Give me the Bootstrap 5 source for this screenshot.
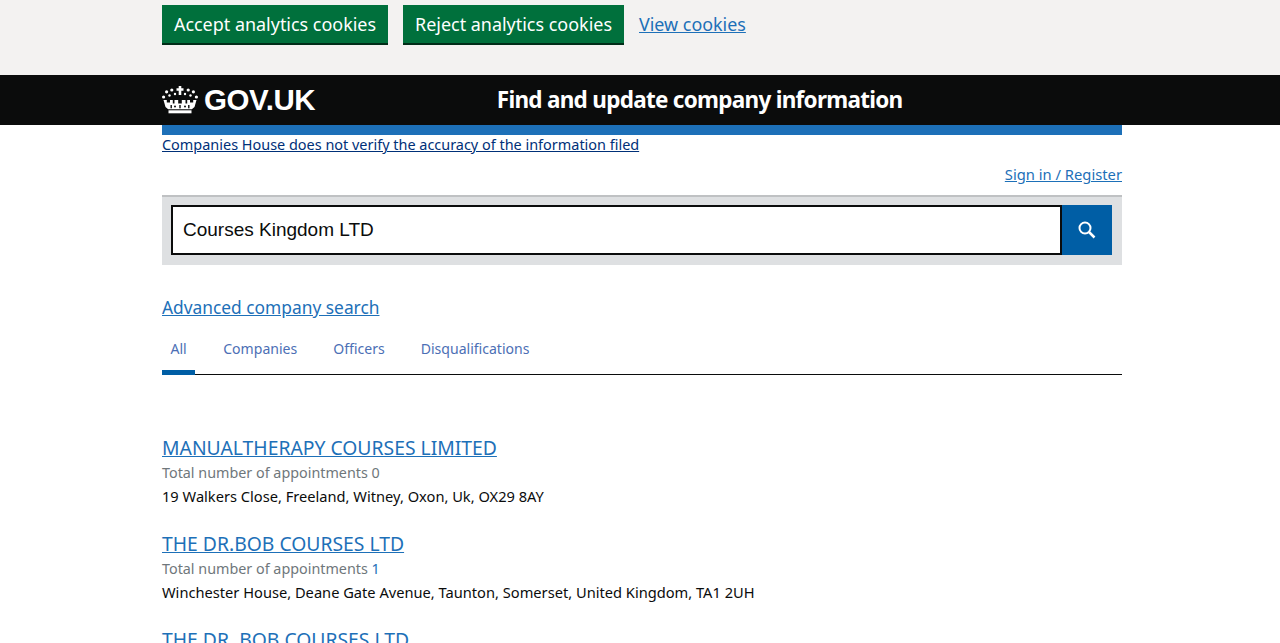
<!DOCTYPE html>
<html lang="en">
<head>
<meta charset="utf-8">
<title>Find and update company information</title>
<link href="https://cdn.jsdelivr.net/npm/bootstrap@5.3.0/dist/css/bootstrap.min.css" rel="stylesheet">
<style>
html,body{height:643px;overflow:hidden}
body{font-family:"Noto Sans",sans-serif;color:#0b0c0c;background:#fff}
.wrap{width:960px;margin-left:162px}
a{color:#1d70b8}
.cookie-bar{background:#f3f2f1;height:75px;padding-top:5px}
.gbtn{background:#00703c;color:#fff;border:0;border-radius:0;box-shadow:0 2px 0 #002d18;width:226px;height:38px;padding:0;text-align:center;font-size:17.95px;line-height:38px;white-space:nowrap}
.gbtn:hover{background:#00703c;color:#fff}
.gbtn-b{width:221px;margin-left:15px}
.cookie-link{font-size:17.9px;margin-left:15px;margin-top:6px}
.top-head{background:#0b0c0c;height:50px;color:#fff}
.logo-text{font-family:"Liberation Sans",sans-serif;font-weight:700;font-size:29.5px;line-height:50px;letter-spacing:-.4px;margin-left:6px}
.svc-name{font-weight:700;font-size:22.5px;line-height:50px;margin-left:181.500px;letter-spacing:-.72px;white-space:nowrap}
.phase-bar{height:10px;background:#1d70b8}
.notice{font-size:14.45px;line-height:20px;color:#003078;display:block}
.sign-line{font-size:14.75px;line-height:18px;margin-top:10px;text-align:right}
.search-band{margin-top:12px;height:70px;background:#dee0e2;border-top:2px solid #bfc1c3;padding:8px 10px 10px 9px}
.search-input{flex:1;height:50px;border:2px solid #0b0c0c;border-radius:0;padding:0 10px;font-size:19px;font-family:"Liberation Sans",sans-serif;color:#0b0c0c;background:#fff;outline:0}
.search-go{width:50px;height:50px;background:#005ea5;border:0;border-radius:0;padding:0}
.adv{font-size:17.35px;line-height:24px;margin-top:30px}
.tab-row{margin-top:15px;border-bottom:1px solid #0b0c0c;height:41px;font-size:14.05px}
.tab-item{padding:0 8px;margin-right:20px;height:41px;line-height:30px;text-decoration:none;color:#4c6fb5;margin-bottom:-1px}
.tab-on{border-bottom:5px solid #005ea5;padding:0 8.500px}
.result-gap{height:60px}
.hit h2{font-size:19.33px;line-height:26px;font-weight:400;margin:0}
.meta{font-size:14.35px;line-height:23.500px;color:#6f777b}
.addr{font-size:14.65px;line-height:22.500px;color:#0b0c0c}
</style>
</head>
<body>
<div class="cookie-bar">
  <div class="wrap d-flex align-items-start">
    <a class="btn gbtn" href="#">Accept analytics cookies</a>
    <a class="btn gbtn gbtn-b" href="#">Reject analytics cookies</a>
    <a class="cookie-link" href="#">View cookies</a>
  </div>
</div>
<header class="top-head">
  <div class="wrap d-flex">
    <div class="d-flex align-items-center">
      <svg width="36" height="28" viewBox="0 0 36 28" aria-hidden="true">
        <g fill="#fff">
          <path d="M16.700 0h2.600v2.200h2.200v2.500h-2.200v4.300h-2.600V4.700h-2.200V2.200h2.200z"/>
          <circle cx="9.800" cy="4" r="1.600"/><circle cx="26.200" cy="4" r="1.600"/>
          <circle cx="13" cy="8" r="1.200"/><circle cx="23" cy="8" r="1.200"/>
          <circle cx="4.600" cy="5.800" r="1.600"/><circle cx="31.400" cy="5.800" r="1.600"/>
          <circle cx="7.500" cy="9.500" r="1.200"/><circle cx="28.500" cy="9.500" r="1.200"/>
          <circle cx="1.600" cy="11" r="1.600"/><circle cx="34.400" cy="11" r="1.600"/>
          <path d="M1.500 14h3.300v2.500H8v-2.500h2.800v3.500h1.700v-3.500h3.700v3.500h3.600v-3.500h3.700v3.500h1.700v-3.500H28v2.500h3.200V14h3.300l-2 7-2.700 2.300H6.200L3.500 21z"/>
          <rect x="6.500" y="24.300" width="23" height="3"/>
        </g>
        <g fill="#0b0c0c">
          <rect x="8.500" y="19" width="1.400" height="3.300"/><rect x="17.300" y="19" width="1.400" height="3.300"/><rect x="26.100" y="19" width="1.400" height="3.300"/>
          <circle cx="13" cy="20.500" r="1"/><circle cx="23" cy="20.500" r="1"/>
        </g>
      </svg>
      <span class="logo-text">GOV.UK</span>
    </div>
    <div class="svc-name">Find and update company information</div>
  </div>
</header>
<main class="wrap">
  <div class="phase-bar"></div>
  <a class="notice" href="#">Companies House does not verify the accuracy of the information filed</a>
  <div class="sign-line"><a href="#">Sign in / Register</a></div>
  <form class="search-band d-flex">
    <input class="search-input" value="Courses Kingdom LTD" aria-label="Search">
    <button class="search-go d-flex align-items-center justify-content-center" type="button" aria-label="Search">
      <svg width="18" height="18" viewBox="0 0 18 18" fill="none" stroke="#fff" stroke-width="2"><circle cx="7" cy="7" r="5.500"/><path d="M11 11l5.500 5.500" stroke-width="2.500"/></svg>
    </button>
  </form>
  <div class="adv"><a href="#">Advanced company search</a></div>
  <nav class="tab-row d-flex">
    <a class="tab-item tab-on" href="#">All</a>
    <a class="tab-item" href="#">Companies</a>
    <a class="tab-item" href="#">Officers</a>
    <a class="tab-item" href="#">Disqualifications</a>
  </nav>
  <div class="result-gap"></div>
  <div class="hit">
    <h2><a href="#">MANUALTHERAPY COURSES LIMITED</a></h2>
    <div class="meta">Total number of appointments 0</div>
    <div class="addr">19 Walkers Close, Freeland, Witney, Oxon, Uk, OX29 8AY</div>
  </div>
  <div class="hit mt-4">
    <h2><a href="#">THE DR.BOB COURSES LTD</a></h2>
    <div class="meta">Total number of appointments <a class="text-decoration-none" href="#">1</a></div>
    <div class="addr">Winchester House, Deane Gate Avenue, Taunton, Somerset, United Kingdom, TA1 2UH</div>
  </div>
  <div class="hit mt-4">
    <h2><a href="#">THE DR. BOB COURSES LTD</a></h2>
  </div>
</main>
</body>
</html>
